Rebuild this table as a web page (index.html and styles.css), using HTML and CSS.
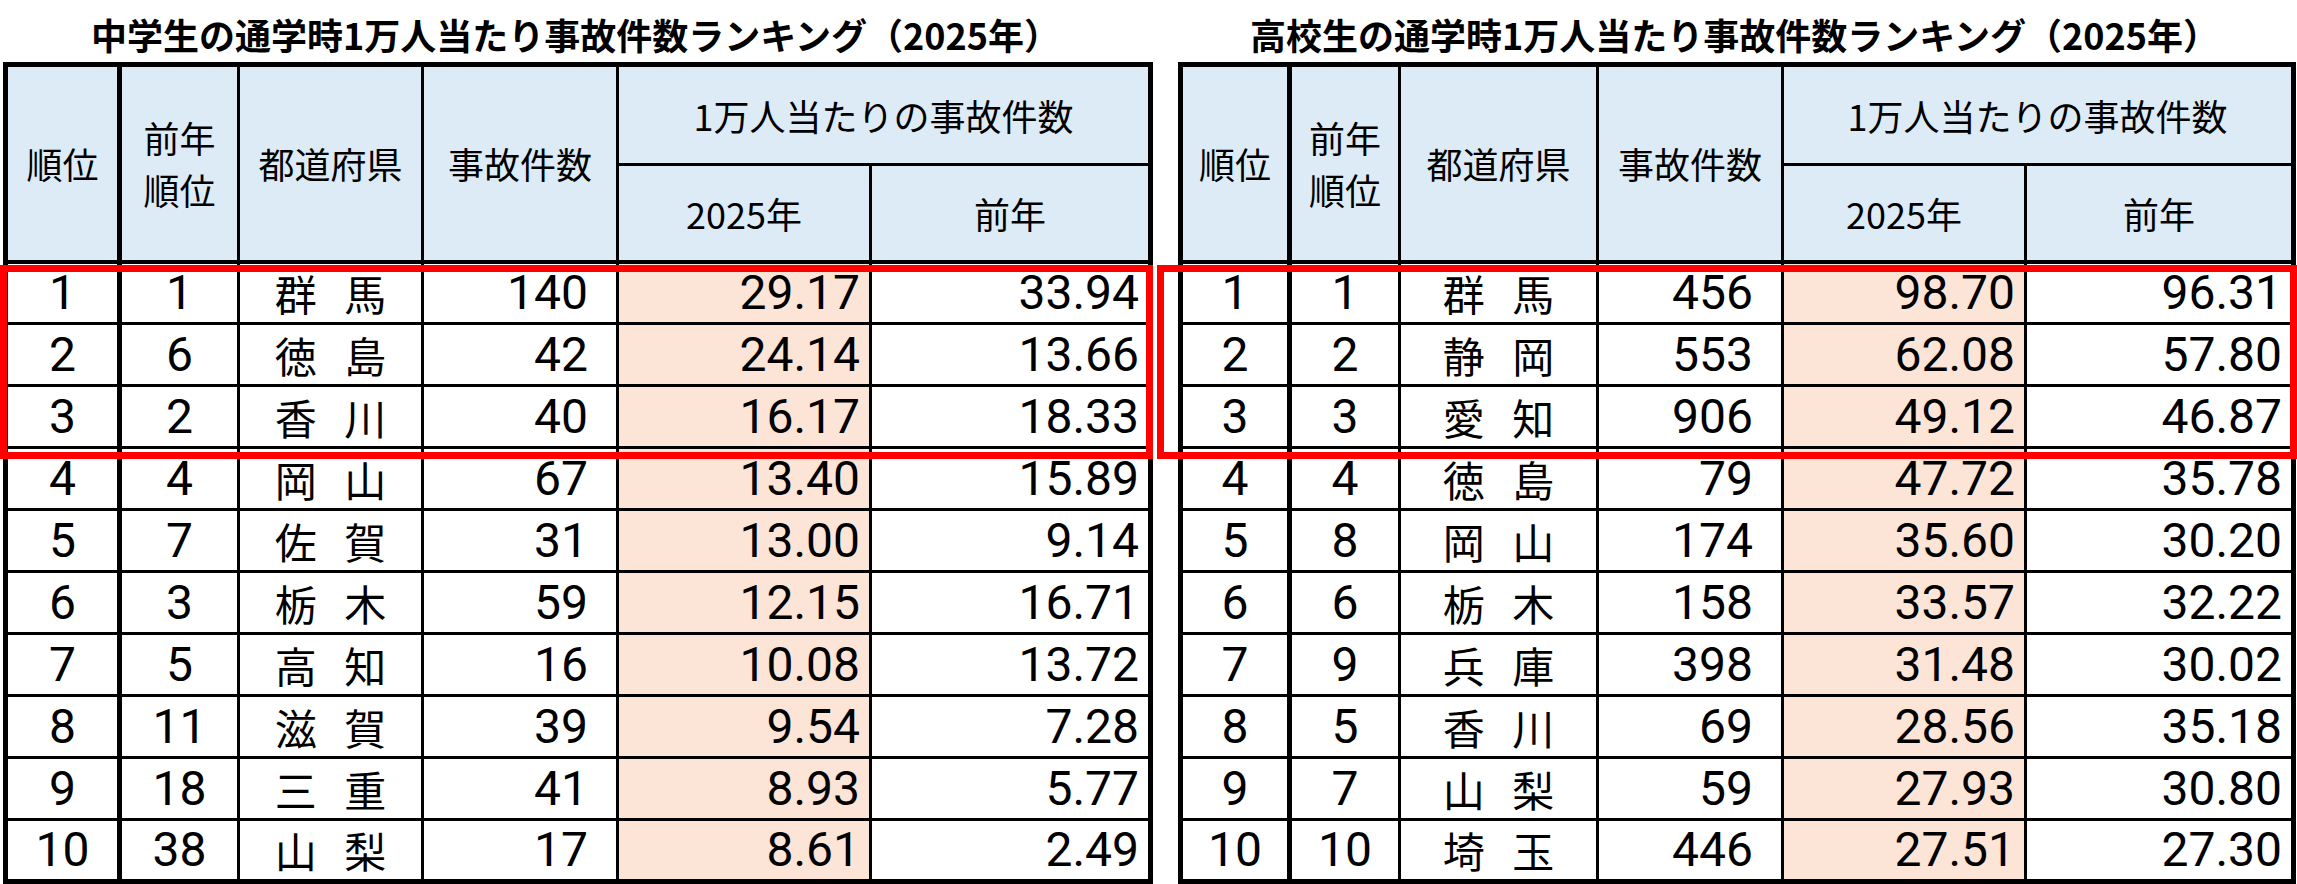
FILE: index.html
```html
<!DOCTYPE html>
<html lang="ja">
<head>
<meta charset="utf-8">
<title>通学時1万人当たり事故件数ランキング（2025年）</title>
<link rel="stylesheet" href="styles.css">
</head>
<body>
<div class="page">
  <section class="panel panel-left">
    <h1 class="title">中学生の通学時1万人当たり事故件数ランキング（2025年）</h1>
    <div class="table-wrap">
      <table class="rank">
        <colgroup>
          <col class="c-rank"><col class="c-prev"><col class="c-pref"><col class="c-count"><col class="c-rate"><col class="c-last">
        </colgroup>
        <thead>
          <tr class="head-top">
            <th rowspan="2" class="first">順位</th>
            <th rowspan="2" class="two-line">前年<br>順位</th>
            <th rowspan="2">都道府県</th>
            <th rowspan="2">事故件数</th>
            <th colspan="2">1万人当たりの事故件数</th>
          </tr>
          <tr class="head-sub">
            <th>2025年</th>
            <th>前年</th>
          </tr>
        </thead>
        <tbody>
          <tr><td class="first">1</td><td>1</td><td class="pref">群 馬</td><td class="num count">140</td><td class="num rate">29.17</td><td class="num last">33.94</td></tr>
          <tr><td class="first">2</td><td>6</td><td class="pref">徳 島</td><td class="num count">42</td><td class="num rate">24.14</td><td class="num last">13.66</td></tr>
          <tr><td class="first">3</td><td>2</td><td class="pref">香 川</td><td class="num count">40</td><td class="num rate">16.17</td><td class="num last">18.33</td></tr>
          <tr><td class="first">4</td><td>4</td><td class="pref">岡 山</td><td class="num count">67</td><td class="num rate">13.40</td><td class="num last">15.89</td></tr>
          <tr><td class="first">5</td><td>7</td><td class="pref">佐 賀</td><td class="num count">31</td><td class="num rate">13.00</td><td class="num last">9.14</td></tr>
          <tr><td class="first">6</td><td>3</td><td class="pref">栃 木</td><td class="num count">59</td><td class="num rate">12.15</td><td class="num last">16.71</td></tr>
          <tr><td class="first">7</td><td>5</td><td class="pref">高 知</td><td class="num count">16</td><td class="num rate">10.08</td><td class="num last">13.72</td></tr>
          <tr><td class="first">8</td><td>11</td><td class="pref">滋 賀</td><td class="num count">39</td><td class="num rate">9.54</td><td class="num last">7.28</td></tr>
          <tr><td class="first">9</td><td>18</td><td class="pref">三 重</td><td class="num count">41</td><td class="num rate">8.93</td><td class="num last">5.77</td></tr>
          <tr><td class="first">10</td><td>38</td><td class="pref">山 梨</td><td class="num count">17</td><td class="num rate">8.61</td><td class="num last">2.49</td></tr>
        </tbody>
      </table>
      <div class="highlight"></div>
    </div>
  </section>

  <section class="panel panel-right">
    <h1 class="title">高校生の通学時1万人当たり事故件数ランキング（2025年）</h1>
    <div class="table-wrap">
      <table class="rank">
        <colgroup>
          <col class="c-rank"><col class="c-prev"><col class="c-pref"><col class="c-count"><col class="c-rate"><col class="c-last">
        </colgroup>
        <thead>
          <tr class="head-top">
            <th rowspan="2" class="first">順位</th>
            <th rowspan="2" class="two-line">前年<br>順位</th>
            <th rowspan="2">都道府県</th>
            <th rowspan="2">事故件数</th>
            <th colspan="2">1万人当たりの事故件数</th>
          </tr>
          <tr class="head-sub">
            <th>2025年</th>
            <th>前年</th>
          </tr>
        </thead>
        <tbody>
          <tr><td class="first">1</td><td>1</td><td class="pref">群 馬</td><td class="num count">456</td><td class="num rate">98.70</td><td class="num last">96.31</td></tr>
          <tr><td class="first">2</td><td>2</td><td class="pref">静 岡</td><td class="num count">553</td><td class="num rate">62.08</td><td class="num last">57.80</td></tr>
          <tr><td class="first">3</td><td>3</td><td class="pref">愛 知</td><td class="num count">906</td><td class="num rate">49.12</td><td class="num last">46.87</td></tr>
          <tr><td class="first">4</td><td>4</td><td class="pref">徳 島</td><td class="num count">79</td><td class="num rate">47.72</td><td class="num last">35.78</td></tr>
          <tr><td class="first">5</td><td>8</td><td class="pref">岡 山</td><td class="num count">174</td><td class="num rate">35.60</td><td class="num last">30.20</td></tr>
          <tr><td class="first">6</td><td>6</td><td class="pref">栃 木</td><td class="num count">158</td><td class="num rate">33.57</td><td class="num last">32.22</td></tr>
          <tr><td class="first">7</td><td>9</td><td class="pref">兵 庫</td><td class="num count">398</td><td class="num rate">31.48</td><td class="num last">30.02</td></tr>
          <tr><td class="first">8</td><td>5</td><td class="pref">香 川</td><td class="num count">69</td><td class="num rate">28.56</td><td class="num last">35.18</td></tr>
          <tr><td class="first">9</td><td>7</td><td class="pref">山 梨</td><td class="num count">59</td><td class="num rate">27.93</td><td class="num last">30.80</td></tr>
          <tr><td class="first">10</td><td>10</td><td class="pref">埼 玉</td><td class="num count">446</td><td class="num rate">27.51</td><td class="num last">27.30</td></tr>
        </tbody>
      </table>
      <div class="highlight"></div>
    </div>
  </section>
</div>
</body>
</html>
```

FILE: styles.css
```css
html, body {
  margin: 0;
  padding: 0;
  background: #ffffff;
}

body {
  font-family: Roboto, "Noto Sans CJK JP", sans-serif;
  color: #000;
  width: 2297px;
  height: 884px;
  overflow: hidden;
}

.page {
  display: flex;
  gap: 30px;
  padding-left: 3px;
}

.panel {
  display: flex;
  flex-direction: column;
}

.panel-left { width: 1145px; }
.panel-right { width: 1113px; }

.title {
  margin: 0;
  height: 62px;
  box-sizing: border-box;
  padding-top: 12px;
  font-family: "Noto Sans CJK JP", sans-serif;
  font-size: 36px;
  line-height: 44px;
  font-weight: 700;
  text-align: center;
  white-space: nowrap;
}

.table-wrap {
  position: relative;
}

.rank {
  width: 100%;
  border-collapse: collapse;
  table-layout: fixed;
  border: 5px solid #000;
}

.rank th,
.rank td {
  border: 3px solid #000;
  padding: 0;
  text-align: center;
  vertical-align: middle;
  white-space: nowrap;
}

.rank .first {
  border-right-width: 5px;
}

.rank th {
  background: #ddebf7;
  font-family: "Noto Sans CJK JP", sans-serif;
  font-weight: 400;
  font-size: 36px;
  line-height: 52px;
}

.rank th.two-line {
  line-height: 52px;
}

.rank .head-top { height: 100px; }
.rank .head-sub { height: 97px; }

.rank .head-sub th,
.rank .head-top th[rowspan] {
  border-bottom-width: 4px;
}

.rank tbody tr { height: 62px; }

.rank td {
  font-size: 48px;
  line-height: 56px;
}

.rank td.pref {
  font-family: "Noto Sans CJK JP", sans-serif;
  font-size: 42px;
  line-height: 56px;
  word-spacing: 18px;
}

.rank td.num { text-align: right; }
.rank td.count { padding-right: 28px; }
.rank td.rate { padding-right: 9px; background: #fce4d6; }
.rank td.last { padding-right: 9px; }

/* column widths */
.panel-left .c-rank  { width: 114px; }
.panel-left .c-prev  { width: 119px; }
.panel-left .c-pref  { width: 184px; }
.panel-left .c-count { width: 195px; }
.panel-left .c-rate  { width: 253px; }
.panel-left .c-last  { width: 280px; }

.panel-right .c-rank  { width: 109px; }
.panel-right .c-prev  { width: 110px; }
.panel-right .c-pref  { width: 198px; }
.panel-right .c-count { width: 185px; }
.panel-right .c-rate  { width: 243px; }
.panel-right .c-last  { width: 268px; }

/* red highlight frame over the top three rows */
.highlight {
  position: absolute;
  top: 203px;
  height: 194px;
  box-sizing: border-box;
  border: 7px solid #ff0000;
  pointer-events: none;
}

.panel-left .highlight {
  left: -3px;
  width: 1153px;
}

.panel-right .highlight {
  left: -21px;
  width: 1140px;
}
```
